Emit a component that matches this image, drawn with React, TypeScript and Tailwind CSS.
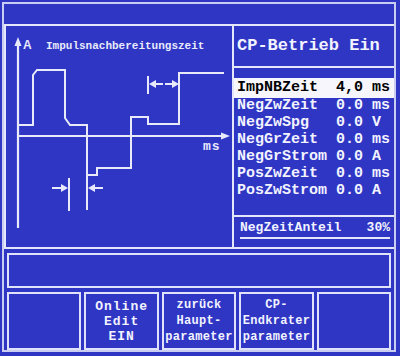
const LINE = '#e8eafc';

const params = [
  { label: 'ImpNBZeit', value: '4,0 ms', active: true },
  { label: 'NegZwZeit', value: '0.0 ms' },
  { label: 'NegZwSpg', value: '0.0 V' },
  { label: 'NegGrZeit', value: '0.0 ms' },
  { label: 'NegGrStrom', value: '0.0 A' },
  { label: 'PosZwZeit', value: '0.0 ms' },
  { label: 'PosZwStrom', value: '0.0 A' },
];

function PulseGraph() {
  return (
    <svg width="226" height="221" viewBox="6 26 226 221" fill="none">
      {/* axes */}
      <g stroke={LINE} strokeWidth="2.2">
        <path d="M18 228 V42" />
        <path d="M18 136 H224" />
      </g>
      <g fill={LINE}>
        <path d="M18 37 L14.5 46 L21.5 46 Z" />
        <path d="M230 136 L221 132.5 L221 139.5 Z" />
      </g>

      {/* waveform */}
      <path
        d="M18 125 H33 V75 L37 70 H65 V118 L70 125 H87 V175 H97 V168 H131 V117 H148 V124 H179 V73 H224"
        stroke={LINE}
        strokeWidth="2"
      />
      <path d="M87 175 V210" stroke={LINE} strokeWidth="2" />

      {/* lower dimension arrows */}
      <g stroke={LINE} strokeWidth="2">
        <path d="M69 178 V211" />
        <path d="M52 188 H62" />
        <path d="M103 188 H93" />
        <path d="M148 76 V94" />
        <path d="M163 84 H155" />
        <path d="M165 84 H173" />
      </g>
      <g fill={LINE}>
        <path d="M68 188 L61 184 L61 192 Z" />
        <path d="M88 188 L95 184 L95 192 Z" />
        <path d="M149 84 L156 80 L156 88 Z" />
        <path d="M179 84 L172 80 L172 88 Z" />
      </g>

      <text
        x="23"
        y="49"
        fill={LINE}
        fontFamily="'Liberation Sans', sans-serif"
        fontWeight="bold"
        fontSize="12"
      >
        A
      </text>
      <text
        x="46"
        y="49"
        fill={LINE}
        fontFamily="'Liberation Mono', monospace"
        fontWeight="bold"
        fontSize="11"
      >
        Impulsnachbereitungszeit
      </text>
      <text
        x="203"
        y="150"
        fill={LINE}
        fontFamily="'Liberation Mono', monospace"
        fontWeight="bold"
        fontSize="13"
        letterSpacing="1"
      >
        ms
      </text>
    </svg>
  );
}

function SoftKey({ lines, small }: { lines: string[]; small?: boolean }) {
  return (
    <div className="flex flex-1 flex-col items-center justify-center border-2 border-[#dfe2fa] font-bold">
      {lines.map((l) => (
        <div
          key={l}
          className={
            small
              ? 'text-[12px] leading-[16px] tracking-[0.3px]'
              : 'text-[13px] leading-[15px] tracking-[1px]'
          }
        >
          {l}
        </div>
      ))}
    </div>
  );
}

export default function App() {
  return (
    <div className="h-[356px] w-[400px] bg-[#2f36c4] p-[2px] font-['Liberation_Mono',monospace] text-[#f2f3ff]">
      <div className="flex h-[350px] w-[394px] flex-col border-2 border-[#c9cdf2]">
        <div className="h-[20px]" />

        {/* main area: graph + parameter list */}
        <div className="flex h-[225px] border-b-2 border-[#e4e6fb]">
          <div className="w-[228px] border-l-2 border-t-2 border-[#e4e6fb]">
            <PulseGraph />
          </div>

          <div className="flex flex-1 flex-col border-l-2 border-t-2 border-[#e4e6fb]">
            <div className="flex h-[40px] items-center pl-[3px] text-[17px] font-bold">
              CP-Betrieb Ein
            </div>
            <div className="h-[2px] bg-[#e4e6fb]" />
            <div className="h-[10px]" />

            {params.map((p) => (
              <div
                key={p.label}
                className={`flex items-center whitespace-pre pl-[3px] text-[15px] font-bold ${
                  p.active ? 'h-[20px] bg-[#f6f6fc] text-black' : 'h-[17px]'
                }`}
              >
                <span className="w-[99px]">{p.label}</span>
                <span>{p.value}</span>
              </div>
            ))}

            <div className="h-[15px]" />
            <div className="h-[2px] bg-[#e4e6fb]" />
            <div className="flex flex-1 items-start px-[4px] pl-[6px] pt-[3px]">
              <div className="flex w-full justify-between border-b-2 border-[#e4e6fb] pb-[1px] text-[13px] font-bold leading-[16px]">
                <span>NegZeitAnteil</span>
                <span>30%</span>
              </div>
            </div>
          </div>
        </div>

        {/* message line */}
        <div className="mx-[3px] mt-[4px] h-[35px] border-2 border-[#dfe2fa]" />

        {/* soft keys */}
        <div className="mt-[4px] flex flex-1 gap-[3px] px-[3px]">
          <SoftKey lines={[]} />
          <SoftKey lines={['Online', 'Edit', 'EIN']} />
          <SoftKey lines={['zurück', 'Haupt-', 'parameter']} small />
          <SoftKey lines={['CP-', 'Endkrater', 'parameter']} small />
          <SoftKey lines={[]} />
        </div>
      </div>
    </div>
  );
}
